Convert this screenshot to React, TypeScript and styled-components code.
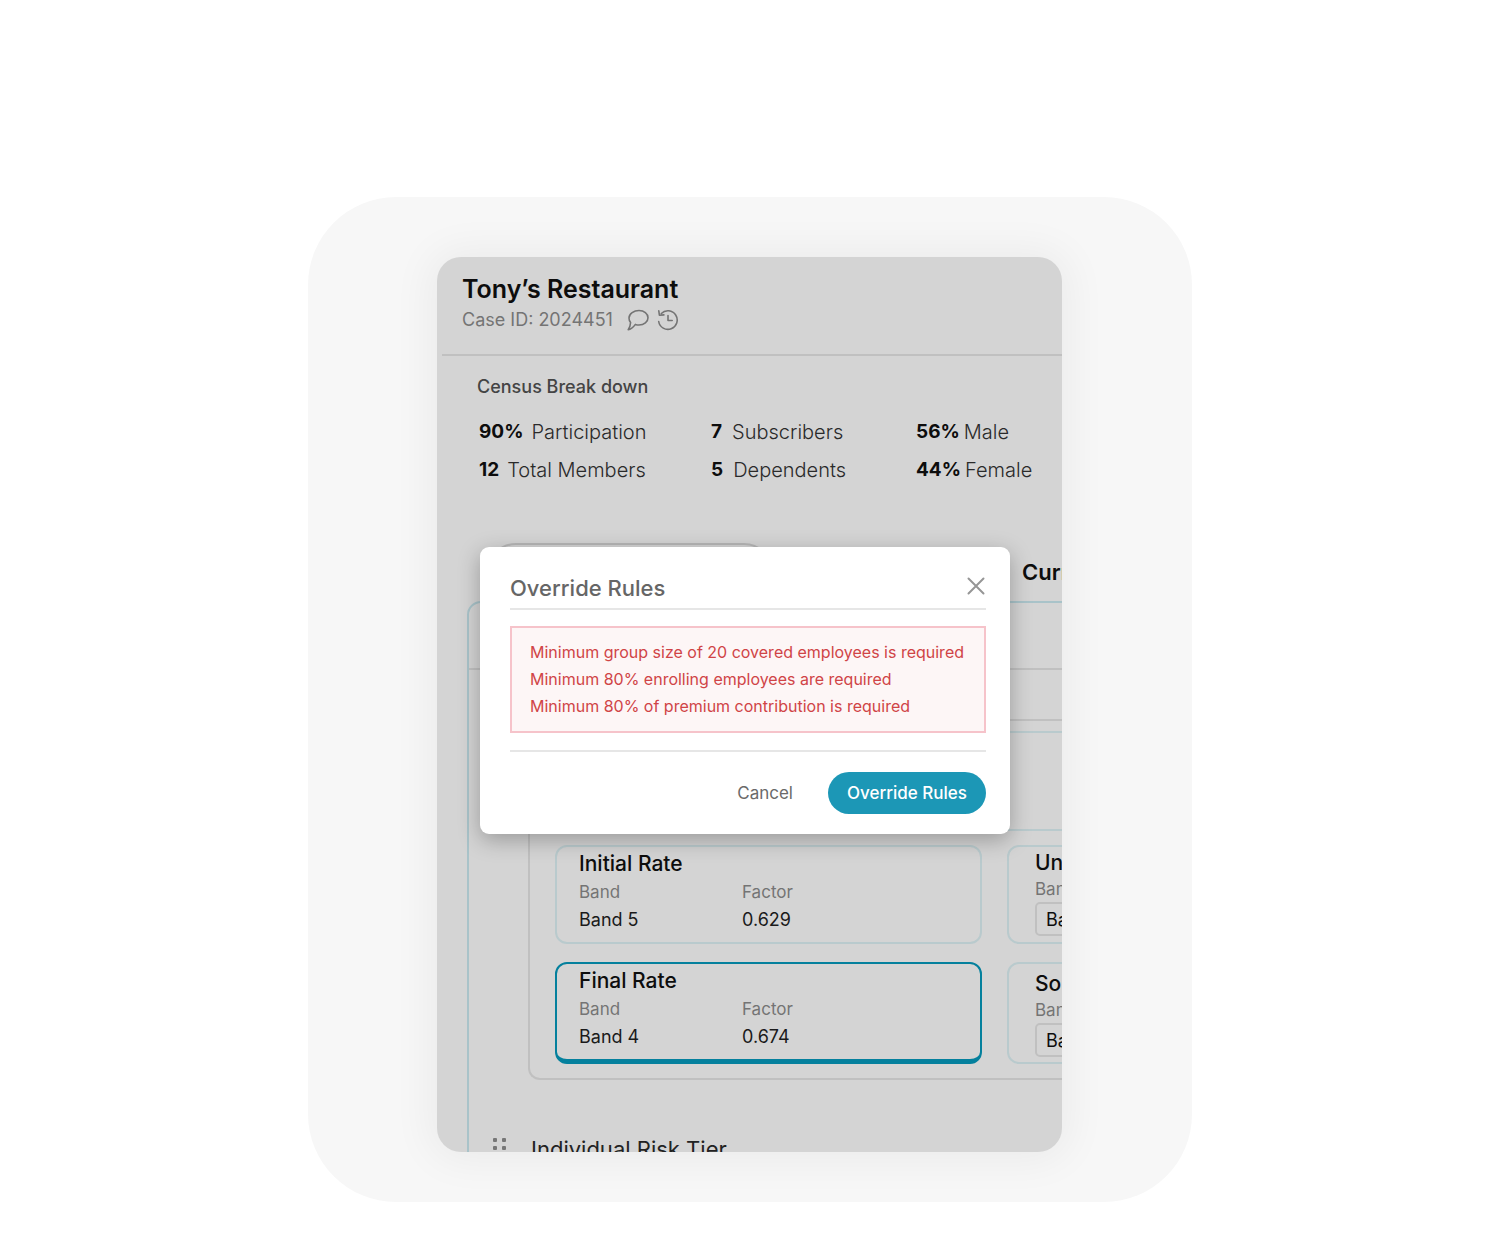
import React from "react";
import styled, { createGlobalStyle } from "styled-components";

const color = {
  screen: "#d4d4d4",
  ink: "#0d0d0d",
  text: "#444",
  muted: "#747474",
  rule: "#c0c0c0",
  tealSoft: "#b9cacd",
  tealFrame: "#a9c3c9",
  tealStrong: "#04809d",
  primary: "#1c97b6",
  danger: "#d04446",
};

const GlobalStyle = createGlobalStyle`
  *, *::before, *::after { box-sizing: border-box; }
  body {
    margin: 0;
    background: #fff;
    color: ${color.ink};
    font-family: Inter, "Liberation Sans", sans-serif;
  }
  h1, h2, h3, p, ul, dl, dd { margin: 0; padding: 0; font-weight: inherit; }
  button, select { font: inherit; }
`;

const Page = styled.main`
  display: flex;
  justify-content: center;
  padding: 197px 0 42px;
`;

const Backdrop = styled.div`
  width: 100%;
  max-width: 884px;
  padding: 60px 130px 50px 129px;
  border-radius: 88px;
  background: #f7f7f7;
`;

const Screen = styled.div`
  position: relative;
  aspect-ratio: 625 / 895;
  overflow: hidden;
  border-radius: 24px;
  background: ${color.screen};
  box-shadow: 0 1px 40px 8px rgba(0, 0, 0, 0.05);
`;

const CaseHeader = styled.header`
  margin-left: 5px;
  padding: 16px 20px 22px;
  border-bottom: 2px solid ${color.rule};
`;

const CaseTitle = styled.h1`
  font-size: 25px;
  line-height: 32px;
  font-weight: 600;
`;

const CaseMeta = styled.div`
  display: flex;
  align-items: center;
  gap: 8px;
  margin-top: 3px;
  font-size: 18px;
  line-height: 24px;
  color: ${color.muted};
`;

const CaseId = styled.p`
  margin-right: 6px;
`;

const IconButton = styled.button<{ $tone?: string; $drop?: number }>`
  display: flex;
  padding: ${(p) => p.$drop || 0}px 0 0;
  border: 0;
  background: none;
  color: ${(p) => p.$tone || color.muted};
  cursor: pointer;
`;

const Census = styled.section`
  padding: 19px 0 0 40px;
`;

const CensusTitle = styled.h2`
  font-size: 18px;
  line-height: 24px;
  font-weight: 500;
  color: ${color.text};
`;

const CensusGrid = styled.ul`
  display: grid;
  grid-template-columns: 232px 205px max-content;
  row-gap: 14px;
  margin-top: 21px;
  padding-left: 2px;
  list-style: none;
`;

const Stat = styled.li<{ $gap: number }>`
  display: flex;
  gap: ${(p) => p.$gap}px;
  font-size: 20px;
  line-height: 24px;
  font-weight: 300;
  color: #2a2a2a;
  white-space: nowrap;

  strong {
    font-size: 19px;
    font-weight: 700;
    color: ${color.ink};
  }
`;

const PlanTabs = styled.div`
  display: flex;
  align-items: center;
  width: 1000px;
  height: 58px;
  margin-top: 61px;
  padding-left: 50px;
`;

const TabOutline = styled.div`
  width: 286px;
  height: 58px;
  border: 2px solid #b6b6b6;
  border-radius: 29px;
`;

const PlanHeading = styled.h2`
  margin-left: 249px;
  font-size: 22px;
  line-height: 32px;
  font-weight: 600;
`;

const RatingFrame = styled.section`
  width: 1100px;
  margin-left: 30px;
  padding-bottom: 40px;
  border: 2px solid ${color.tealFrame};
  border-radius: 14px;
`;

const FrameHead = styled.div`
  height: 67px;
  border-bottom: 2px solid ${color.rule};
`;

const TierBox = styled.div`
  margin: 49px 0 0 59px;
  padding: 10px 25px 14px;
  border: 2px solid ${color.rule};
  border-right: 0;
  border-radius: 12px 0 0 12px;
`;

const Summary = styled.div`
  height: 100px;
  margin-bottom: 14px;
  border: 2px solid ${color.tealSoft};
  border-radius: 12px;
`;

const RateGrid = styled.div`
  display: grid;
  grid-template-columns: 427px 427px;
  grid-template-rows: 99px 102px;
  gap: 18px 25px;
`;

const RateCard = styled.article<{ $active?: boolean; $top: number; $left: number }>`
  padding: ${(p) => p.$top}px 0 0 ${(p) => p.$left}px;
  border: 2px solid ${(p) => (p.$active ? color.tealStrong : color.tealSoft)};
  border-bottom-width: ${(p) => (p.$active ? 5 : 2)}px;
  border-radius: 12px;
`;

const RateTitle = styled.h3`
  font-size: 21px;
  line-height: 28px;
  font-weight: 500;
`;

const Fields = styled.dl`
  display: grid;
  grid-template-columns: 163px max-content;
`;

const FieldName = styled.dt`
  font-size: 17px;
  line-height: 28px;
  color: ${color.muted};
`;

const FieldValue = styled.dd`
  font-size: 18px;
  line-height: 28px;
  color: #1a1a1a;
`;

const BandLabel = styled.label`
  display: block;
  font-size: 17px;
  line-height: 25px;
  color: ${color.muted};
`;

const BandSelect = styled.select`
  display: block;
  width: 120px;
  height: 34px;
  padding: 0 9px;
  border: 2px solid ${color.rule};
  border-radius: 5px;
  background: transparent;
  appearance: none;
  font-size: 18px;
  color: ${color.ink};
`;

const RiskRow = styled.div`
  display: flex;
  align-items: center;
  gap: 24px;
  margin-top: 53px;
  padding-left: 24px;
`;

const RiskTitle = styled.h2`
  font-size: 22px;
  line-height: 32px;
  color: #222;
`;

const Dialog = styled.section`
  position: absolute;
  top: 290px;
  left: 43px;
  width: calc(100% - 95px);
  padding: 25px 24px 20px 30px;
  border-radius: 9px;
  background: #fff;
  box-shadow: 0 6px 22px rgba(0, 0, 0, 0.28);
`;

const DialogHead = styled.header`
  display: flex;
  align-items: flex-start;
  justify-content: space-between;
  padding-bottom: 4px;
  border-bottom: 2px solid #e6e6e6;
`;

const DialogTitle = styled.h2`
  font-size: 22px;
  line-height: 32px;
  font-weight: 500;
  color: #666;
`;

const Violations = styled.ul`
  margin: 16px 0 17px;
  padding: 11px 18px;
  border: 2px solid #f6c3ca;
  background: #fdf6f6;
  list-style: none;
  font-size: 16px;
  line-height: 27px;
  color: ${color.danger};
`;

const DialogActions = styled.footer`
  display: flex;
  justify-content: flex-end;
  gap: 16px;
  padding-top: 20px;
  border-top: 2px solid #e6e6e6;
`;

const ActionButton = styled.button<{ $primary?: boolean }>`
  height: 42px;
  padding: 0 19px;
  border: 0;
  border-radius: 21px;
  background: ${(p) => (p.$primary ? color.primary : "transparent")};
  color: ${(p) => (p.$primary ? "#fff" : "#6a6a6a")};
  font-size: 17px;
  font-weight: ${(p) => (p.$primary ? 500 : 400)};
  white-space: nowrap;
  cursor: pointer;
`;

const CommentIcon = () => (
  <svg width="22" height="22" viewBox="0 0 22 22" fill="none" stroke="currentColor" strokeWidth="1.6" strokeLinecap="round" strokeLinejoin="round" aria-hidden="true">
    <path d="M12 1.500c5 0 9 3 9 7.200s-4 7.300-9 7.300c-1.300 0-2.500-.2-3.600-.6C6.800 17.600 4.500 20.400 1.200 20.700c1.300-1.500 2.100-3.500 2.400-7.200C2.500 12.200 2 10.600 2 8.900 2 4.600 7 1.500 12 1.500z" />
  </svg>
);

const HistoryIcon = () => (
  <svg width="22" height="22" viewBox="0 0 22 22" fill="none" stroke="currentColor" strokeWidth="1.6" strokeLinecap="round" strokeLinejoin="round" aria-hidden="true">
    <path d="M4.300 4.500a9.300 9.300 0 1 1-2.600 8M1.800 1.800l.6 4.400 4.500-.3M11 6.500v5h4.200" />
  </svg>
);

const CloseIcon = () => (
  <svg width="20" height="20" viewBox="0 0 20 20" stroke="currentColor" strokeWidth="2" strokeLinecap="round" aria-hidden="true">
    <path d="M2.500 2.500l15 15M17.500 2.500l-15 15" />
  </svg>
);

const DragDots = () => (
  <svg width="14" height="24" viewBox="0 0 14 24" fill="#777" aria-hidden="true">
    {[1, 9, 17].map((y) => (
      <React.Fragment key={y}>
        <rect x="0" y={y} width="4" height="4" rx="1" />
        <rect x="9" y={y} width="4" height="4" rx="1" />
      </React.Fragment>
    ))}
  </svg>
);

const stats = [
  { value: "90%", label: "Participation", gap: 8 },
  { value: "7", label: "Subscribers", gap: 10 },
  { value: "56%", label: "Male", gap: 4 },
  { value: "12", label: "Total Members", gap: 8 },
  { value: "5", label: "Dependents", gap: 10 },
  { value: "44%", label: "Female", gap: 4 },
];

const violations = [
  "Minimum group size of 20 covered employees is required",
  "Minimum 80% enrolling employees are required",
  "Minimum 80% of premium contribution is required",
];

type RateProps = { title: string; band: string; factor: string; active?: boolean };

const Rate = ({ title, band, factor, active }: RateProps) => (
  <RateCard $active={active} $top={3} $left={22}>
    <RateTitle>{title}</RateTitle>
    <Fields>
      <FieldName>Band</FieldName>
      <FieldName>Factor</FieldName>
      <FieldValue>{band}</FieldValue>
      <FieldValue>{factor}</FieldValue>
    </Fields>
  </RateCard>
);

type EditableRateProps = { id: string; title: string; band: string; top: number };

const EditableRate = ({ id, title, band, top }: EditableRateProps) => (
  <RateCard $top={top} $left={26}>
    <RateTitle>{title}</RateTitle>
    <BandLabel htmlFor={id}>Band</BandLabel>
    <BandSelect id={id} defaultValue={band}>
      <option>{band}</option>
    </BandSelect>
  </RateCard>
);

export default function App() {
  return (
    <>
      <GlobalStyle />
      <Page>
        <Backdrop>
          <Screen>
            <CaseHeader>
              <CaseTitle>Tony’s Restaurant</CaseTitle>
              <CaseMeta>
                <CaseId>Case ID: 2024451</CaseId>
                <IconButton aria-label="Comments">
                  <CommentIcon />
                </IconButton>
                <IconButton aria-label="History">
                  <HistoryIcon />
                </IconButton>
              </CaseMeta>
            </CaseHeader>

            <Census>
              <CensusTitle>Census Break down</CensusTitle>
              <CensusGrid>
                {stats.map((s) => (
                  <Stat key={s.label} $gap={s.gap}>
                    <strong>{s.value}</strong>
                    <span>{s.label}</span>
                  </Stat>
                ))}
              </CensusGrid>
            </Census>

            <PlanTabs>
              <TabOutline />
              <PlanHeading>Current</PlanHeading>
            </PlanTabs>

            <RatingFrame>
              <FrameHead />
              <TierBox>
                <Summary />
                <RateGrid>
                  <Rate title="Initial Rate" band="Band 5" factor="0.629" />
                  <EditableRate id="underwriter-band" title="Underwriter Rate" band="Band 5" top={2} />
                  <Rate title="Final Rate" band="Band 4" factor="0.674" active />
                  <EditableRate id="sold-band" title="Sold Rate" band="Band 4" top={6} />
                </RateGrid>
              </TierBox>
              <RiskRow>
                <DragDots />
                <RiskTitle>Individual Risk Tier</RiskTitle>
              </RiskRow>
            </RatingFrame>

            <Dialog role="dialog" aria-labelledby="override-title">
              <DialogHead>
                <DialogTitle id="override-title">Override Rules</DialogTitle>
                <IconButton aria-label="Close" $tone="#969696" $drop={4}>
                  <CloseIcon />
                </IconButton>
              </DialogHead>
              <Violations>
                {violations.map((v) => (
                  <li key={v}>{v}</li>
                ))}
              </Violations>
              <DialogActions>
                <ActionButton>Cancel</ActionButton>
                <ActionButton $primary>Override Rules</ActionButton>
              </DialogActions>
            </Dialog>
          </Screen>
        </Backdrop>
      </Page>
    </>
  );
}
